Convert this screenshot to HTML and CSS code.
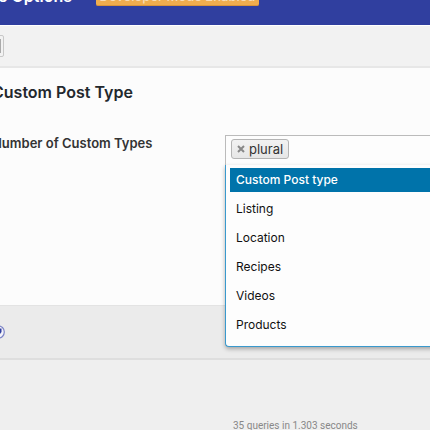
FILE: index.html
```
<!DOCTYPE html>
<html lang="en">
<head>
    <meta charset="utf-8">
    <title>Theme Options</title>
    <link rel="stylesheet" href="styles.css">
</head>
<body>

    <header class="options-header">
        <h1>Theme Options</h1>
        <span class="dev-badge">Developer Mode Enabled</span>
    </header>

    <div class="toolbar">
        <button type="button" class="expand-button" aria-label="Expand options"></button>
    </div>

    <main class="panel">
        <h2>Custom Post Type</h2>
        <div class="field">
            <label for="post-types">Number of Custom Types</label>
            <div class="select">
                <div class="selection">
                    <span class="choice">
                        <button type="button" class="remove" aria-label="Remove plural">
                            <svg width="8" height="8" viewBox="0 0 8 8">
                                <path d="M1 1L7 7M7 1L1 7" stroke="#888" stroke-width="2"/>
                            </svg>
                        </button>
                        plural
                    </span>
                    <input type="text" id="post-types" autocomplete="off">
                </div>
                <ul class="dropdown" role="listbox">
                    <li role="option" aria-selected="true" class="active">Custom Post type</li>
                    <li role="option">Listing</li>
                    <li role="option">Location</li>
                    <li role="option">Recipes</li>
                    <li role="option">Videos</li>
                    <li role="option">Products</li>
                </ul>
            </div>
        </div>
    </main>

    <div class="share">
        <a href="#" aria-label="Share">
            <svg width="14" height="14" viewBox="0 0 14 14">
                <circle cx="7" cy="7" r="6.3" fill="#f3f3fa" stroke="#7c84c6" stroke-width="1.2"/>
                <path d="M5 3.5H10.5V7L9 9H5Z" fill="#303f9f"/>
            </svg>
        </a>
    </div>

    <footer>35 queries in 1.303 seconds</footer>

</body>
</html>
```

FILE: styles.css
```
* {
    box-sizing: border-box;
}

body {
    font-family: Inter, "Open Sans", sans-serif;
    font-size: 12px;
    color: #222;
    background-color: #efefef;
    margin: 0;
    overflow: hidden;
}

h1, h2 {
    margin: 0;
    font-size: 16px;
    font-weight: 600;
    white-space: nowrap;
}

.options-header {
    display: flex;
    align-items: flex-end;
    gap: 24px;
    height: 25px;
    padding-bottom: 19px;
    background-color: #303f9f;
    color: #fff;
}

.options-header h1 {
    display: flex;
    justify-content: flex-end;
    width: 72px;
    line-height: 20px;
}

.dev-badge {
    width: 163px;
    border-radius: 2px;
    border-bottom: 1px solid #d9953b;
    background-color: #f0ad4e;
    color: #f8dcb4;
    font-size: 13px;
    font-weight: 500;
    line-height: 18px;
    text-align: center;
    white-space: nowrap;
}

.toolbar {
    display: flex;
    align-items: center;
    height: 43px;
    border-top: 1px solid #fff;
    border-bottom: 2px solid #e7e7e7;
    background-color: #f2f2f2;
}

.expand-button {
    width: 24px;
    height: 22px;
    margin-left: -20px;
    padding: 3px 2px;
    border: 1px solid #c8c8c8;
    border-radius: 2px;
    background: linear-gradient(to right, #aaa 20px, #f7f7f7 20px) content-box #f7f7f7;
}

.panel {
    min-height: 237px;
    margin-left: -8px;
    padding-top: 12px;
    background-color: #fcfcfc;
}

h2 {
    color: #23282d;
    line-height: 24px;
}

.field {
    display: grid;
    grid-template-columns: 233px 1fr;
    margin-top: 31px;
}

.field label {
    color: #333;
    font-size: 13px;
    font-weight: 600;
    line-height: 16px;
}

.select {
    position: relative;
}

.selection {
    display: flex;
    gap: 5px;
    height: 32px;
    padding: 3px 5px;
    border: 1px solid #bbb;
    border-right: none;
    border-bottom: none;
    background-color: #fdfdfd;
}

.selection input {
    flex: 1;
    min-width: 0;
    border: none;
    outline: none;
    background: none;
}

.choice {
    display: flex;
    align-items: center;
    gap: 4px;
    height: 20px;
    padding: 0 5px;
    border: 1px solid #b4b4b4;
    border-radius: 3px;
    background: linear-gradient(#f2f2f2, #e6e6e6);
    color: #333;
    font-size: 13px;
}

.remove {
    display: flex;
    padding: 0;
    border: none;
    background: none;
}

.dropdown {
    position: absolute;
    top: 30px;
    left: 0;
    right: 0;
    margin: 0;
    padding: 3px 0 9px 4px;
    list-style: none;
    border: 1px solid #3999cd;
    border-width: 0 0 1px 1px;
    border-radius: 0 0 0 4px;
    background-color: #fdfdfd;
    color: #111;
    box-shadow: 0 2px 4px rgba(0, 0, 0, 0.3);
}

.dropdown li {
    padding: 3px 6px;
    margin-bottom: 5px;
    line-height: 18px;
}

.dropdown li:last-child {
    margin-bottom: 0;
}

.dropdown .active {
    background-color: #0073aa;
    color: #fff;
    font-weight: 500;
}

.share {
    height: 55px;
    padding-top: 19px;
    border-top: 1px solid #e3e3e3;
    border-bottom: 2px solid #dedede;
    background-color: #ebebeb;
}

.share a {
    display: block;
    width: 14px;
    margin-left: -9px;
}

.share svg {
    display: block;
}

footer {
    padding: 58px 0 0 233px;
    color: #888;
    font-family: Roboto, sans-serif;
    font-size: 10px;
    line-height: 16px;
}
```
